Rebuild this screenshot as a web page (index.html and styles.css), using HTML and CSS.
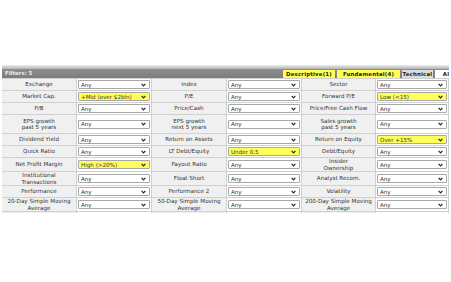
FILE: index.html
```html
<!DOCTYPE html>
<html>
  <head>
    <title>Screener Filters</title>
    <link rel="stylesheet" href="styles.css">
  </head>
  <body>
    <div class="screener">
      <div class="topline"></div>
      <div class="header">
        <span class="title">Filters: 5</span>
        <div class="tabs">
          <span class="tab tab-active tab-desc">Descriptive(1)</span>
          <span class="tab tab-active tab-fund">Fundamental(4)</span>
          <span class="tab tab-current tab-tech">Technical</span>
          <span class="tab tab-all">All</span>
        </div>
      </div>

      <div class="grid" id="grid"></div>
    </div>

    <script>
      const filters = [
        ["Exchange", "Any"], ["Index", "Any"], ["Sector", "Any"],
        ["Market Cap.", "+Mid (over $2bln)", true], ["P/E", "Any"], ["Forward P/E", "Low (<15)", true],
        ["P/B", "Any"], ["Price/Cash", "Any"], ["Price/Free Cash Flow", "Any"],
        ["EPS growth<br>past 5 years", "Any", false, "tall"], ["EPS growth<br>next 5 years", "Any", false, "tall"], ["Sales growth<br>past 5 years", "Any", false, "tall"],
        ["Dividend Yield", "Any"], ["Return on Assets", "Any"], ["Return on Equity", "Over +15%", true],
        ["Quick Ratio", "Any"], ["LT Debt/Equity", "Under 0.5", true], ["Debt/Equity", "Any"],
        ["Net Profit Margin", "High (>20%)", true], ["Payout Ratio", "Any"], ["Insider<br>Ownership", "Any"],
        ["Institutional<br>Transactions", "Any"], ["Float Short", "Any"], ["Analyst Recom.", "Any"],
        ["Performance", "Any"], ["Performance 2", "Any"], ["Volatility", "Any"],
        ["20-Day Simple Moving<br>Average", "Any"], ["50-Day Simple Moving<br>Average", "Any"], ["200-Day Simple Moving<br>Average", "Any"],
        // last row is cut off by the frame, only its top edge shows
        ["", ""], ["", ""], ["", ""],
      ];

      const chevron = `<svg class="chev" viewBox="0 0 8 6" width="5" height="4"><path d="M1 1.2 L4 4.4 L7 1.2" fill="none" stroke="#222" stroke-width="1.8"/></svg>`;

      const grid = document.getElementById("grid");
      filters.forEach(([label, value, on, size]) => {
        const l = document.createElement("div");
        l.className = "label" + (size ? " " + size : "");
        l.innerHTML = label;
        const s = document.createElement("div");
        s.className = "cell";
        s.innerHTML = `<div class="select${on ? " selected" : ""}"><span>${value}</span>${chevron}</div>`;
        grid.appendChild(l);
        grid.appendChild(s);
      });
    </script>
  </body>
</html>
```

FILE: styles.css
```css
body {
  margin: 0;
  background: white;
  font-family: "DejaVu Sans", Verdana, sans-serif;
}

.screener {
  margin: 65px 0 0 2px;
  width: 447px;
  height: 148px;
  overflow: hidden;
}

.topline {
  height: 4px;
  background: linear-gradient(#ececec, #b4b4b4);
}

.header {
  display: flex;
  align-items: stretch;
  height: 9px;
  background: linear-gradient(#8e8e8e, #7c7c7c);
  white-space: nowrap;
}

.title {
  flex: 0 0 281px;
  padding-left: 3px;
  box-sizing: border-box;
  color: #eeeeee;
  font-size: 5.4px;
  font-weight: bold;
  line-height: 9px;
}

.tabs {
  display: flex;
  gap: 2px;
  padding-top: 1px;
}

.tab {
  flex-shrink: 0;
  background: white;
  color: #222;
  font-size: 5.4px;
  font-weight: bold;
  line-height: 8px;
  text-align: center;
  letter-spacing: 0.2px;
}

.tab-desc {
  width: 52px;
}

.tab-fund {
  width: 63px;
}

.tab-tech {
  width: 31px;
}

.tab-all {
  width: 24px;
}

.tab-active {
  background: #ffff55;
}

.tab-current {
  background: #dcdcdc;
}

.grid {
  display: grid;
  grid-template-columns: 74px 74px 74px 74px 73px 72px;
  gap: 1px;
  padding-top: 1px;
  background: #d0d0d0;
}

.label {
  display: flex;
  align-items: center;
  justify-content: center;
  min-height: 11px;
  background: #f0f0f0;
  color: #333;
  font-size: 5.6px;
  line-height: 6.5px;
  text-align: center;
}

.label.tall {
  min-height: 18px;
}

.cell {
  display: flex;
  align-items: center;
  padding: 0 1px;
  background: white;
}

.select {
  display: flex;
  align-items: center;
  justify-content: space-between;
  width: 100%;
  height: 9px;
  padding: 0 3px 0 2px;
  box-sizing: border-box;
  border: 1px solid #a8a8a8;
  border-radius: 1px;
  background: white;
  color: #333;
  font-size: 5.6px;
}

.selected {
  background: #ffff5c;
}

.chev {
  flex-shrink: 0;
}
```
